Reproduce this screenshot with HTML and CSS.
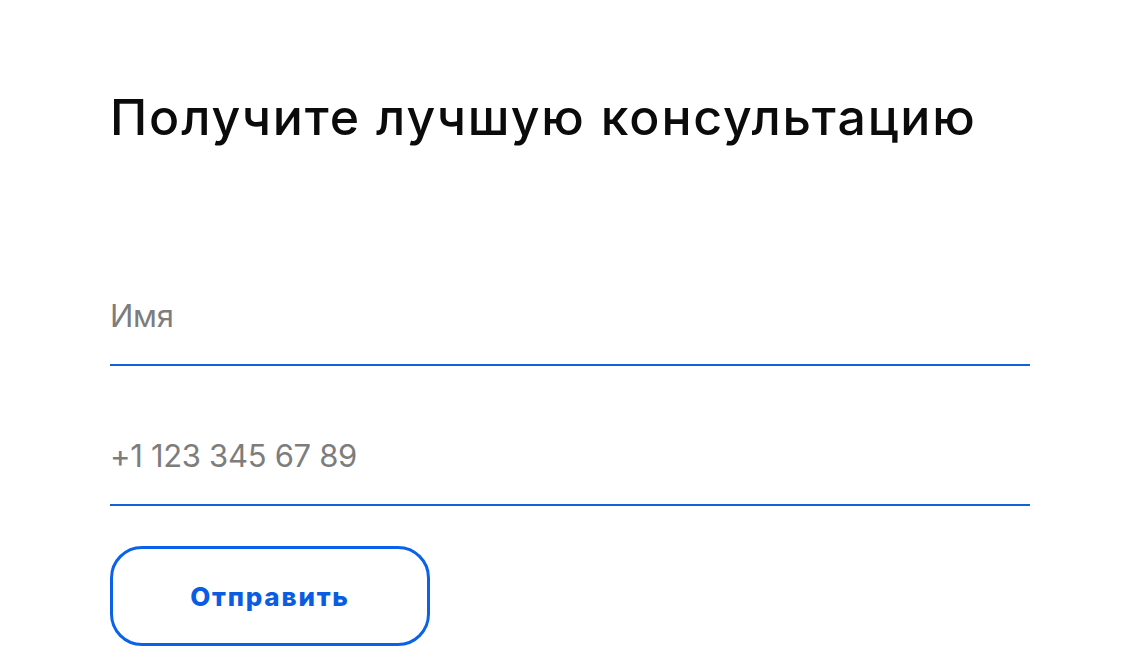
FILE: index.html
```html
<!DOCTYPE html>
<html lang="ru">
<head>
<meta charset="utf-8">
<link rel="stylesheet" href="styles.css">
</head>
<body>
<main class="page">
  <h1 class="title">Получите лучшую консультацию</h1>
  <form class="form">
    <input class="field" type="text" placeholder="Имя">
    <input class="field" type="tel" placeholder="+1 123 345 67 89">
    <button class="submit" type="button">Отправить</button>
  </form>
</main>
</body>
</html>
```
FILE: styles.css
```css
* { box-sizing: border-box; }
html, body { margin: 0; background: #fff; }
body { font-family: Inter, "Noto Sans", sans-serif; }
.page {
  padding: 83px 0 0 110px;
  width: 1030px;
}
.title {
  margin: 0;
  font-size: 50px;
  line-height: 68px;
  font-weight: 500;
  letter-spacing: 1.85px;
  color: #0b0b0b;
}
.form {
  margin-top: 145px;
  display: flex;
  flex-direction: column;
  align-items: flex-start;
}
.field {
  width: 920px;
  height: 70px;
  border: none;
  border-bottom: 2px solid #1462d9;
  padding: 0 0 30px 0;
  font-family: inherit;
  font-size: 31px;
  letter-spacing: -0.3px;
  color: #333;
  outline: none;
  background: transparent;
}
.field + .field { margin-top: 70px; }
.field::placeholder { color: #7d7d7d; }
.submit {
  margin-top: 40px;
  width: 320px;
  height: 100px;
  border: 3px solid #0b62e8;
  border-radius: 32px;
  background: #fff;
  color: #0a5ce3;
  font-family: inherit;
  font-size: 26px;
  font-weight: 800;
  letter-spacing: 1.8px;
  cursor: pointer;
}
```
